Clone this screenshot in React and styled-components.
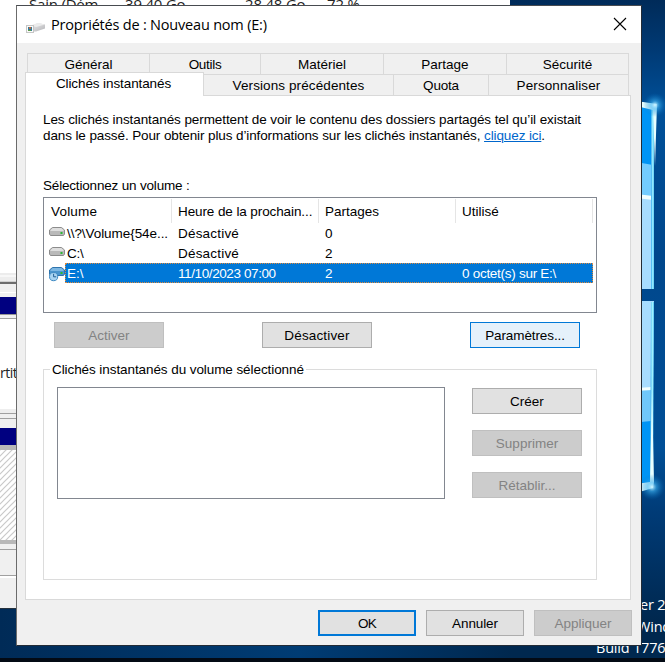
import React from "react";
import styled, { createGlobalStyle, css } from "styled-components";

const Global = createGlobalStyle`
  * { box-sizing: border-box; }
  body { margin: 0; overflow: hidden; font: 13.5px/16px "Liberation Sans", Arial, sans-serif; color: #000; }
`;

const Desktop = styled.div`
  position: relative;
  width: 665px;
  height: 662px;
  overflow: hidden;
  background: linear-gradient(90deg, #002b57, #003c74 45%, #00284f 77%);
`;

const Wallpaper = styled.svg`
  position: absolute;
  inset: 0;
`;

const Manager = styled.div`
  position: absolute;
  left: 0;
  top: 0;
  width: 510px;
  height: 609px;
  background: #fff;
  border-bottom: 1px solid #26323e;
  display: flex;
  flex-direction: column;
  overflow: hidden;
`;

const ManagerRow = styled.div`
  position: relative;
  height: 273px;
  flex: none;
  font: 15px/18px "Open Sans", "Noto Sans", sans-serif;
  color: #222;
`;

const ManagerCell = styled.span`
  position: absolute;
  top: -5px;
  left: ${(p) => p.$x}px;
  white-space: nowrap;
  letter-spacing: -0.2px;
`;

const Band = styled.div`
  flex: none;
  height: ${(p) => p.$h}px;
  background: ${(p) => p.$c};
  ${(p) => p.$text && css`
    padding-top: 45px;
    font: 14px/18px "Open Sans", sans-serif;
    letter-spacing: -0.5px;
    color: #222;
  `}
`;

const HatchSvg = styled.svg`
  flex: none;
  display: block;
`;

const Taskbar = styled.div`
  position: absolute;
  left: 0;
  right: 0;
  bottom: 0;
  height: 4px;
  background: #030a14;
`;

const Watermark = styled.div`
  position: absolute;
  left: ${(p) => p.$x}px;
  top: ${(p) => p.$y}px;
  white-space: nowrap;
  color: #fff;
  font: 14.5px/20px "Open Sans", "Noto Sans", sans-serif;
  letter-spacing: -0.2px;
`;

const Dialog = styled.div`
  position: absolute;
  left: 16px;
  top: 5px;
  width: 626px;
  height: 641px;
  border: 1px solid #222b36;
  border-left-color: #6b6b6b;
  border-top-color: #484b50;
  background: #f0f0f0;
  display: flex;
  flex-direction: column;
`;

const TitleBar = styled.header`
  height: 37px;
  flex: none;
  background: #fff;
  display: flex;
  align-items: center;
  padding: 0 14px 0 9px;
`;

const TitleGlyph = styled.svg`
  flex: none;
  margin-top: 7px;
`;

const Title = styled.h1`
  margin: 0 auto 0 6px;
  font: 14.5px/20px "Open Sans", "Noto Sans", sans-serif;
  white-space: nowrap;
  letter-spacing: -0.2px;
`;

const CloseButton = styled.button`
  width: 14px;
  height: 14px;
  margin-bottom: 2px;
  padding: 0;
  border: 0;
  background: none;
  display: block;
  svg { display: block; }
`;

const Tabs = styled.nav`
  margin: 10px 0 0 8px;
  width: 606px;
  flex: none;
`;

const TabRow = styled.div`
  display: flex;
  height: 21px;
  margin-left: ${(p) => p.$indent}px;
`;

const Tab = styled.button`
  width: ${(p) => p.$w}px;
  height: 22px;
  flex: none;
  margin: 0;
  padding: 2px 0 0;
  border: 1px solid #d9d9d9;
  border-right-width: ${(p) => (p.$last ? 1 : 0)}px;
  background: #f0f0f0;
  font: inherit;
  color: #000;
  text-align: center;
  white-space: nowrap;
  letter-spacing: ${(p) => p.$ls || 0}px;
  ${(p) => p.$active && css`
    height: 24px;
    margin: -2px -1px 0 0;
    padding: 0 2px 1px 0;
    background: #fff;
    border-bottom: 0;
    border-right-width: 1px;
    position: relative;
    z-index: 1;
  `}
`;

const Panel = styled.main`
  margin-left: 8px;
  width: 606px;
  height: 505px;
  flex: none;
  border: 1px solid #d9d9d9;
  background: #fff;
  padding: 16px 0 0 17px;
`;

const Line = styled.div`
  height: 16px;
  white-space: nowrap;
  letter-spacing: ${(p) => p.$ls || 0}px;
  margin-top: ${(p) => p.$mt || 0}px;
`;

const Link = styled.a`
  color: #0066cc;
  text-decoration: underline;
`;

const ListView = styled.div`
  width: 554px;
  height: 116px;
  margin-top: 3px;
  border: 1px solid #828790;
  background: #fff;
`;

const ListRow = styled.div`
  position: relative;
  display: grid;
  grid-template-columns: 128px 147px 137px 137px;
  width: 549px;
  height: ${(p) => (p.$head ? 25 : 20)}px;
  line-height: 22px;
  color: ${(p) => (p.$selected ? "#fff" : "#000")};
`;

const HeadCell = styled.div`
  height: 24px;
  margin-top: 1px;
  line-height: 25px;
  padding-left: ${(p) => p.$pad}px;
  border-right: 1px solid #e5e5e5;
  white-space: nowrap;
  letter-spacing: ${(p) => p.$ls || 0}px;
`;

const Cell = styled.div`
  position: relative;
  height: 20px;
  padding-left: ${(p) => p.$pad}px;
  white-space: nowrap;
  letter-spacing: ${(p) => p.$ls || 0}px;
`;

const Selection = styled.div`
  position: absolute;
  inset: 0 0 0 21px;
  background: #0078d7;
  border: 1px dotted #e08a3c;
`;

const RowIcon = styled.svg`
  position: absolute;
  left: 5px;
  top: 3px;
`;

const ButtonRow = styled.div`
  display: flex;
  gap: 98px;
  margin: 9px 0 0 11px;
`;

const Button = styled.button`
  display: flex;
  align-items: center;
  justify-content: center;
  width: ${(p) => p.$w || 110}px;
  height: 26px;
  flex: none;
  margin: 0;
  padding: 1px 0 0;
  border: 1px solid #adadad;
  background: #e1e1e1;
  color: #000;
  font: inherit;
  letter-spacing: ${(p) => p.$ls || 0}px;
  ${(p) => p.$kind === "hot" && css`border-color: #0078d7; background: #e5f1fb;`}
  ${(p) => p.$kind === "default" && css`border: 2px solid #0078d7;`}
  &:disabled { color: #838383; background: #cccccc; border-color: #bfbfbf; }
`;

const Group = styled.fieldset`
  position: relative;
  width: 554px;
  height: 211px;
  margin: 21px 0 0;
  border: 1px solid #dcdcdc;
  padding: 17px 0 0 13px;
  display: flex;
  gap: 27px;
`;

const GroupLabel = styled.span`
  position: absolute;
  left: 6px;
  top: -8px;
  padding: 0 2px;
  background: #fff;
  white-space: nowrap;
  letter-spacing: ${(p) => p.$ls || 0}px;
`;

const SnapshotList = styled.div`
  width: 388px;
  height: 112px;
  border: 1px solid #828790;
`;

const Stack = styled.div`
  display: flex;
  flex-direction: column;
  gap: 16px;
  padding-top: 1px;
`;

const Footer = styled.footer`
  display: flex;
  justify-content: flex-end;
  gap: 10px;
  padding: 10px 9px 0 0;
`;

function DriveIcon({ snapshot }) {
  const [light, body, dark] = snapshot ? ["#7db7e2", "#4b94cc", "#2f74ad"] : ["#dedede", "#b9b9b9", "#8c8c8c"];
  return (
    <RowIcon width="17" height="17" viewBox="0 0 17 17">
      <path d="M3.5 1.5h9L15.5 4v4l-1 1.5h-13L.5 8V4z" fill={body} stroke={dark} />
      <path d="M3.8 2h8.4l2.4 2H1.5z" fill={light} />
      <path d="M1.5 4.5h13" stroke={light} />
      <rect x="11.5" y="6" width="2" height="2" fill="#2bbb35" />
      {snapshot && (
        <g>
          <circle cx="4.6" cy="10.6" r="4.1" fill="#a9d3f1" stroke="#3c88c2" />
          <path d="M4.6 7.8v3h2.6" fill="none" stroke="#235f94" />
        </g>
      )}
    </RowIcon>
  );
}

function TitleIcon() {
  return (
    <TitleGlyph width="19" height="12" viewBox="0 0 19 12">
      <defs>
        <linearGradient id="casing" x1="0" y1="0" x2="1" y2="1">
          <stop offset="0" stopColor="#eeeeee" />
          <stop offset="1" stopColor="#b4b4b8" />
        </linearGradient>
      </defs>
      <path d="M5 3.5 12 1l7 1.5v4l-9 3H7z" fill="url(#casing)" />
      <path d="M5 3.5 12 1l7 1.5-9 2.6z" fill="#ececec" />
      <rect x=".5" y="3.5" width="7" height="7" fill="#fafafa" stroke="#c6c6c6" />
      <path d="M2 5h4v4H2z" fill="#347d9a" />
      <path d="M3 5h2v2H3z" fill="#bd6b42" />
      <path d="M2 8h3v1H2z" fill="#5d9b4c" />
    </TitleGlyph>
  );
}

function Hatch() {
  return (
    <HatchSvg width="510" height="90">
      <defs>
        <pattern id="hatch" width="6" height="6" patternUnits="userSpaceOnUse">
          <path d="M-1 7 7-1M-1 1 1-1M5 7 7 5" stroke="#c9c9c9" strokeWidth="1.2" />
        </pattern>
      </defs>
      <rect width="510" height="90" fill="#fff" />
      <rect width="510" height="90" fill="url(#hatch)" />
    </HatchSvg>
  );
}

function WindowsGlow() {
  return (
    <Wallpaper width="665" height="662">
      <defs>
        <linearGradient id="night" x1="0" y1="0" x2="0" y2="1">
          <stop offset="0" stopColor="#002b59" />
          <stop offset=".08" stopColor="#003a75" />
          <stop offset=".17" stopColor="#005099" />
          <stop offset=".4" stopColor="#00478c" />
          <stop offset=".7" stopColor="#004f97" />
          <stop offset=".8" stopColor="#003b77" />
          <stop offset=".97" stopColor="#00284f" />
        </linearGradient>
        <linearGradient id="edge" x1="0" y1="0" x2="1" y2="0">
          <stop offset="0" stopColor="#36a9ee" />
          <stop offset=".6" stopColor="#a5f3ff" />
          <stop offset="1" stopColor="#4fc4f4" />
        </linearGradient>
        <radialGradient id="flare">
          <stop offset="0" stopColor="#d6f7ff" />
          <stop offset=".35" stopColor="#3eb3f2" stopOpacity=".6" />
          <stop offset="1" stopColor="#0070c0" stopOpacity="0" />
        </radialGradient>
      </defs>
      <rect x="510" width="155" height="640" fill="url(#night)" />
      <path d="M636 104l18 4v181h-18z" fill="#0094f5" />
      <path d="M636 162l17 3v41h-17z" fill="#73ccff" />
      <path d="M636 196h17v93h-17z" fill="#a7dcff" />
      <path d="M636 194l17 2v4l-17-2z" fill="#f3ffff" />
      <path d="M651 109h3v180h-3z" fill="url(#edge)" />
      <path d="M636 101l21 3-2 62-2-56-17-4z" fill="#e8ffff" />
      <path d="M636 301h18l-2 184-16 3z" fill="#a7dcff" />
      <path d="M636 389h16v32h-16z" fill="#70c7fa" />
      <path d="M636 422l15-1v64l-15 3z" fill="#0094f5" />
      <path d="M636 388l16-1v3l-16 1z" fill="#f3ffff" />
      <path d="M651 302h3l-1 184h-3z" fill="url(#edge)" />
      <path d="M636 484l14-2 2-90 2 90-1 6-17 5z" fill="#e8ffff" />
      <circle cx="655" cy="105" r="12" fill="url(#flare)" />
      <circle cx="652" cy="487" r="13" fill="url(#flare)" />
    </Wallpaper>
  );
}

const partitionHead = [
  [2, "#ececec"], [2, "#f7f7f7"], [4, "#ededed"], [1, "#d0d0d0"], [2, "#6d6d6d"], [8, "#f0f0f0"], [1, "#fff"], [4, "#f0f0f0"],
  [17, "#000080"], [1, "#989898"], [3, "#f0f0f0"], [1, "#a0a0a0"],
];
const partitionGap = [
  [4, "#eeeeee"], [1, "#a0a0a0"], [4, "#f0f0f0"], [1, "#a0a0a0"], [9, "#f0f0f0"], [17, "#000080"], [5, "#b8b8b8"],
];
const partitionFoot = [
  [4, "#b8b8b8"], [5, "#f0f0f0"], [1, "#a0a0a0"], [25, "#f0f0f0"], [1, "#a0a0a0"], [2, "#fff"], [40, "#f0f0f0"],
];

const Bands = ({ items }) => items.map(([h, c], i) => <Band key={i} $h={h} $c={c} />);

export default function App() {
  return (
    <Desktop>
      <Global />
      <WindowsGlow />
      <Manager>
        <ManagerRow>
          <ManagerCell $x={29}>Sain (Dém...</ManagerCell>
          <ManagerCell $x={125}>39,40 Go</ManagerCell>
          <ManagerCell $x={245}>28,48 Go</ManagerCell>
          <ManagerCell $x={327}>72 %</ManagerCell>
        </ManagerRow>
        <Bands items={partitionHead} />
        <Band $h={90} $c="#fff" $text>rtition</Band>
        <Bands items={partitionGap} />
        <Hatch />
        <Bands items={partitionFoot} />
      </Manager>
      <Watermark $x={640} $y={595}>er 2019</Watermark>
      <Watermark $x={637} $y={617}>Windows</Watermark>
      <Watermark $x={596} $y={638}>Build 17763</Watermark>
      <Taskbar />
      <Dialog>
        <TitleBar>
          <TitleIcon />
          <Title>Propriétés de : Nouveau nom (E:)</Title>
          <CloseButton aria-label="Fermer">
            <svg width="14" height="14"><path d="M1 1l12 12M13 1L1 13" stroke="#000" strokeWidth="1.1" /></svg>
          </CloseButton>
        </TitleBar>
        <Tabs>
          <TabRow $indent={2}>
            <Tab $w={122}>Général</Tab>
            <Tab $w={111} $ls={-0.3}>Outils</Tab>
            <Tab $w={123}>Matériel</Tab>
            <Tab $w={123}>Partage</Tab>
            <Tab $w={123} $last>Sécurité</Tab>
          </TabRow>
          <TabRow $indent={0}>
            <Tab $w={179} $active $ls={-0.1}>Clichés instantanés</Tab>
            <Tab $w={190} $ls={0.1}>Versions précédentes</Tab>
            <Tab $w={95} $ls={-0.2}>Quota</Tab>
            <Tab $w={141} $last $ls={0.1}>Personnaliser</Tab>
          </TabRow>
        </Tabs>
        <Panel>
          <Line $ls={-0.08}>Les clichés instantanés permettent de voir le contenu des dossiers partagés tel qu’il existait</Line>
          <Line $ls={-0.11}>dans le passé. Pour obtenir plus d’informations sur les clichés instantanés, <Link>cliquez ici</Link>.</Line>
          <Line $mt={34} $ls={-0.18}>Sélectionnez un volume :</Line>
          <ListView>
            <ListRow $head>
              <HeadCell $pad={7} $ls={0.2}>Volume</HeadCell>
              <HeadCell $pad={6} $ls={-0.1}>Heure de la prochain...</HeadCell>
              <HeadCell $pad={6}>Partages</HeadCell>
              <HeadCell $pad={6}>Utilisé</HeadCell>
            </ListRow>
            <ListRow>
              <DriveIcon />
              <Cell $pad={23} $ls={-0.06}>{"\\\\?\\Volume{54e..."}</Cell>
              <Cell $pad={6} $ls={0.2}>Désactivé</Cell>
              <Cell $pad={6}>0</Cell>
            </ListRow>
            <ListRow>
              <DriveIcon />
              <Cell $pad={23} $ls={-0.3}>{"C:\\"}</Cell>
              <Cell $pad={6} $ls={0.2}>Désactivé</Cell>
              <Cell $pad={6}>2</Cell>
            </ListRow>
            <ListRow $selected>
              <Selection />
              <DriveIcon snapshot />
              <Cell $pad={23}>{"E:\\"}</Cell>
              <Cell $pad={6} $ls={-0.4}>11/10/2023 07:00</Cell>
              <Cell $pad={6}>2</Cell>
              <Cell $pad={6} $ls={-0.28}>{"0 octet(s) sur E:\\"}</Cell>
            </ListRow>
          </ListView>
          <ButtonRow>
            <Button disabled>Activer</Button>
            <Button $ls={0.15}>Désactiver</Button>
            <Button $kind="hot" $ls={-0.1}>Paramètres...</Button>
          </ButtonRow>
          <Group>
            <GroupLabel $ls={-0.08}>Clichés instantanés du volume sélectionné</GroupLabel>
            <SnapshotList />
            <Stack>
              <Button>Créer</Button>
              <Button disabled>Supprimer</Button>
              <Button disabled>Rétablir...</Button>
            </Stack>
          </Group>
        </Panel>
        <Footer>
          <Button $w={98} $kind="default" $ls={-0.8}>OK</Button>
          <Button $w={98} $ls={-0.1}>Annuler</Button>
          <Button $w={98} disabled>Appliquer</Button>
        </Footer>
      </Dialog>
    </Desktop>
  );
}
